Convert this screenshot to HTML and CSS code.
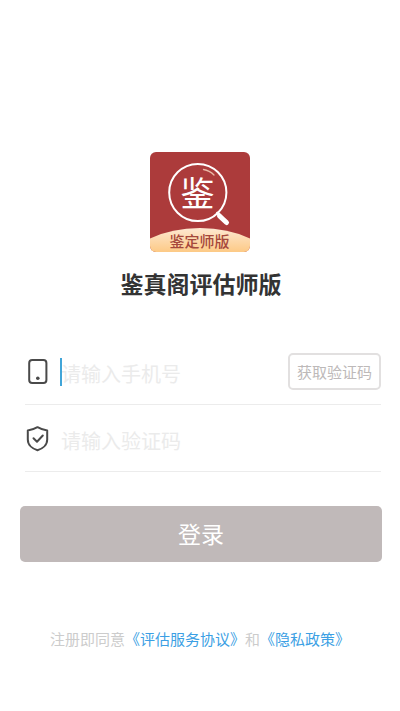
FILE: index.html
```html
<!DOCTYPE html>
<html lang="zh-CN">
<head>
<meta charset="utf-8">
<meta name="viewport" content="width=device-width, initial-scale=1">
<title>鉴真阁评估师版</title>
<link rel="stylesheet" href="styles.css">
</head>
<body>
<main class="login">
  <header class="brand">
    <svg class="logo" viewBox="0 0 100 100" role="img" aria-label="鉴定师版">
      <defs>
        <clipPath id="tile"><rect width="100" height="100" rx="6"/></clipPath>
        <linearGradient id="gold" x1="0" x2="0" y1="0" y2="1">
          <stop offset="0" stop-color="#fde8d2"/>
          <stop offset="1" stop-color="#fdca86"/>
        </linearGradient>
      </defs>
      <g clip-path="url(#tile)">
        <rect width="100" height="100" fill="#ac3b3b"/>
        <path d="M0 86.500Q22 76 50 76T100 86.500V100H0Z" fill="url(#gold)"/>
      </g>
      <g fill="none" stroke="#fff" stroke-linecap="round">
        <circle cx="47.800" cy="40.500" r="28.600" stroke-width="2"/>
        <path d="M67.500 61l3 3" stroke-width="3"/>
        <path d="M69.500 64l7 6.500" stroke-width="5"/>
        <path d="M53.500 17.500Q59.500 18.500 64 23" stroke="#e9b9a6" stroke-width="1.300"/>
      </g>
      <text class="logo-mark" x="47.500" y="54" text-anchor="middle">鉴</text>
      <text class="logo-caption" x="49.500" y="95" text-anchor="middle">鉴定师版</text>
    </svg>
    <h1 class="title">鉴真阁评估师版</h1>
  </header>

  <form class="form">
    <div class="field">
      <svg class="field-icon" viewBox="0 0 26 28" aria-hidden="true">
        <rect x="4.200" y="2.900" width="17.200" height="23" rx="3"/>
        <circle class="dot" cx="12.800" cy="21.300" r="1.800"/>
      </svg>
      <div class="entry entry-active">
        <input class="input" type="tel" placeholder="请输入手机号" aria-label="手机号">
      </div>
      <button class="code-button" type="button">获取验证码</button>
    </div>
    <div class="field">
      <svg class="field-icon" viewBox="0 0 26 28" aria-hidden="true">
        <path d="M12.500 3.200Q17 5.800 22.200 6.500V15.500C22.200 21 17.500 24.800 12.500 26.300C7.500 24.800 2.800 21 2.800 15.500V6.500Q8 5.800 12.500 3.200Z"/>
        <path d="M8.500 14.200l3.500 3.500 5.800-6.200"/>
      </svg>
      <div class="entry">
        <input class="input" type="text" inputmode="numeric" placeholder="请输入验证码" aria-label="验证码">
      </div>
    </div>
    <button class="submit" type="submit">登录</button>
  </form>

  <p class="terms">注册即同意<a href="#service">《评估服务协议》</a>和<a href="#privacy">《隐私政策》</a></p>
</main>
</body>
</html>
```

FILE: styles.css
```css
* {
  box-sizing: border-box;
}

body {
  margin: 0;
  background: #fff;
  color: #333;
  font-family: "Noto Sans CJK SC", sans-serif;
}

button,
input {
  font-family: inherit;
}

.login {
  padding: 152px 18px 48px 20px;
}

.brand {
  display: flex;
  flex-direction: column;
  align-items: center;
  gap: 14px;
}

.logo {
  width: 100px;
  height: 100px;
  margin-right: 2px;
}

.logo-mark {
  fill: #fff;
  font-size: 34px;
  font-weight: 400;
}

.logo-caption {
  fill: #a5483c;
  font-size: 15px;
  font-weight: 500;
}

.title {
  margin: 0;
  font-size: 23px;
  font-weight: 700;
  line-height: 34px;
}

.form {
  margin-top: 38px;
}

.field {
  display: flex;
  align-items: center;
  height: 67px;
  margin: 0 1px 0 5px;
  border-bottom: 1px solid #ececec;
}

.field-icon {
  flex: none;
  width: 26px;
  height: 28px;
  margin-right: 10px;
  fill: none;
  stroke: #4a4a4a;
  stroke-width: 2;
  stroke-linecap: round;
  stroke-linejoin: round;
}

.field-icon .dot {
  fill: #4a4a4a;
  stroke: none;
}

.entry {
  position: relative;
  flex: 1;
  min-width: 0;
}

.entry-active::before {
  content: "";
  position: absolute;
  top: 4px;
  left: -1px;
  width: 2px;
  height: 28px;
  background: #41a5d8;
}

.input {
  display: block;
  width: 100%;
  height: 34px;
  padding: 4px 0 0;
  border: 0;
  outline: 0;
  background: transparent;
  color: #333;
  font-size: 20px;
  line-height: 30px;
}

.input::placeholder {
  color: #ebebeb;
  opacity: 1;
}

.code-button {
  flex: none;
  height: 37px;
  padding: 0 7px;
  border: 2px solid #e2e0e0;
  border-radius: 5px;
  background: #fff;
  color: #bdb9b9;
  font-size: 15px;
}

.submit {
  display: block;
  width: 100%;
  height: 56px;
  margin-top: 34px;
  padding: 0 0 2px;
  border: 0;
  border-radius: 5px;
  background: #c0b9b9;
  color: #fff;
  font-size: 23px;
}

.terms {
  margin: 65px 2px 0 0;
  color: #ccc;
  font-size: 15px;
  line-height: 24px;
  text-align: center;
}

.terms a {
  color: #3c9fe4;
  text-decoration: none;
}
```
